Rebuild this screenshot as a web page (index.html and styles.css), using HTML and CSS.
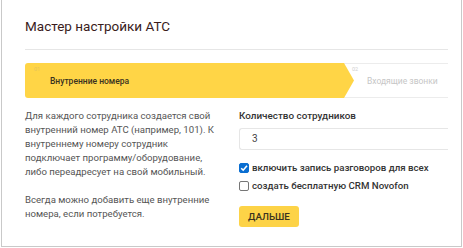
FILE: index.html
```html
<!DOCTYPE html>
<html>
<head>
<meta charset="utf-8">
<link rel="stylesheet" href="styles.css">
</head>
<body>
<div class="frame">
  <h1 class="title">Мастер настройки АТС</h1>
  <div class="rule"></div>
  <div class="steps">
    <div class="step step-active">
      <span class="step-num">01</span>
      <span class="step-label">Внутренние номера</span>
    </div>
    <div class="step step-next">
      <span class="step-num">02</span>
      <span class="step-label">Входящие звонки</span>
    </div>
  </div>
  <div class="cols">
    <div class="desc">
      <p>Для каждого сотрудника создается свой внутренний номер АТС (например, 101). К внутреннему номеру сотрудник подключает программу/оборудование, либо переадресует на свой мобильный.</p>
      <p>Всегда можно добавить еще внутренние номера, если потребуется.</p>
    </div>
    <div class="form">
      <label class="field-label">Количество сотрудников</label>
      <div class="input">3</div>
      <label class="check check-first"><span class="box box-on"><svg viewBox="0 0 10 10" width="10" height="10"><path d="M2.2 5.2 L4.2 7.2 L8 2.8" fill="none" stroke="#fff" stroke-width="1.6"/></svg></span>включить запись разговоров для всех</label>
      <label class="check"><span class="box"></span>создать бесплатную CRM Novofon</label>
      <div class="btn">ДАЛЬШЕ</div>
    </div>
  </div>
</div>
</body>
</html>
```
FILE: styles.css
```css
* { box-sizing: border-box; }
html, body { margin: 0; padding: 0; background: #fff; }
body { font-family: Roboto, "Noto Sans", sans-serif; width: 463px; height: 248px; overflow: hidden; }
.frame {
  margin-left: 1px;
  width: 461px;
  height: 247px;
  border: 1px solid #c9c9c9;
  border-top: none;
  padding: 14px 14px 0 23px;
}
.title {
  margin: 0;
  font-size: 13.5px;
  font-weight: 400;
  color: #3a1c1c;
  line-height: 24px;
}
.rule {
  margin-top: 11px;
  height: 1px;
  background: #e6e6e6;
  width: 423px;
}
.steps {
  margin-top: 13px;
  display: flex;
  width: 423px;
  height: 35px;
}
.step { position: relative; height: 35px; }
.step-active {
  width: 329px;
  background: #ffd546;
  border-radius: 3px 0 0 3px;
  clip-path: polygon(0 0, 319px 0, 329px 50%, 319px 100%, 0 100%);
  z-index: 1;
}
.step-next {
  flex: 1;
  margin-left: -10px;
  border-top: 1px solid #ececec;
  border-bottom: 1px solid #ececec;
}
.step-num {
  position: absolute;
  top: 3px;
  font-size: 5.5px;
  color: #e6c35a;
}
.step-active .step-num { left: 9px; }
.step-next .step-num { left: 8px; top: 2px; color: #cfcfcf; }
.step-label {
  position: absolute;
  top: 12px;
  font-size: 8.5px;
  line-height: 12px;
  font-weight: 500;
  white-space: nowrap;
}
.step-active .step-label { left: 25px; color: #3a3220; }
.step-next .step-label { left: 23px; top: 11px; color: #c6c6c6; font-weight: 400; }
.cols {
  display: flex;
  margin-top: 10px;
  width: 423px;
}
.desc {
  width: 214px;
  padding-right: 22px;
  font-size: 9.6px;
  line-height: 14px;
  color: #555;
  padding-top: 1px;
}
.desc p { margin: 0 0 14px 0; }
.form {
  flex: 1;
  display: flex;
  flex-direction: column;
  align-items: flex-start;
  padding-top: 1px;
}
.field-label {
  font-size: 9.9px;
  font-weight: 500;
  color: #333;
  line-height: 14px;
}
.input {
  margin-top: 5px;
  width: 209px;
  height: 22px;
  border: 1px solid #e6e6e6;
  border-right: none;
  border-radius: 3px 0 0 3px;
  font-size: 10px;
  color: #444;
  padding-left: 12px;
  line-height: 20px;
}
.check {
  display: flex;
  align-items: center;
  font-size: 9.7px;
  font-weight: 500;
  color: #333;
  line-height: 14px;
  margin-top: 4px;
}
.check-first { margin-top: 11px; }
.box {
  width: 10px;
  height: 10px;
  border: 1px solid #767676;
  border-radius: 2px;
  margin-right: 3px;
  display: inline-flex;
  background: #fff;
}
.box-on { background: #0a6ed1; border-color: #0a6ed1; }
.box-on svg { margin: -1px; }
.btn {
  margin-top: 13px;
  background: #fdd347;
  border-radius: 3px;
  height: 21px;
  padding: 0 9px;
  font-size: 9.8px;
  font-weight: 500;
  color: #3b3320;
  line-height: 21px;
}
```
